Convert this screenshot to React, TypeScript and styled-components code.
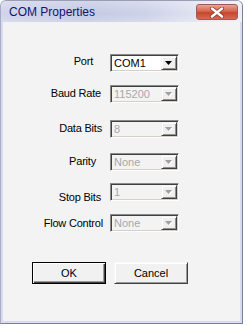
import React from "react";
import styled, { createGlobalStyle } from "styled-components";

const GlobalStyle = createGlobalStyle`
  html, body { margin: 0; padding: 0; background: #ffffff; }
  body { font-family: "Liberation Sans", Arial, sans-serif; }
  * { box-sizing: border-box; }
`;

const Window = styled.div`
  width: 243px;
  height: 324px;
  display: flex;
  flex-direction: column;
  border: 1px solid #7c7f98;
  border-top-color: #9a9db4;
  border-left-color: #a9acc6;
  border-radius: 6px 6px 0 0;
  background: #d9dcee;
  overflow: hidden;
`;

const TitleBar = styled.div`
  height: 21px;
  flex: none;
  display: flex;
  align-items: center;
  justify-content: space-between;
  padding: 0 4px 0 8px;
  background:
    linear-gradient(to bottom, rgba(255,255,255,0.25), rgba(255,255,255,0) 60%, rgba(255,255,255,0.2)),
    linear-gradient(to right, #d0d3ea 0%, #c4c9e3 35%, #cdd1e8 60%, #e6e8f4 88%, #eceef6 100%);
`;

const Title = styled.span`
  font-size: 12px;
  color: #14146a;
  padding-top: 1px;
`;

const CloseButton = styled.div`
  width: 42px;
  height: 16px;
  border-radius: 3px;
  border: 1px solid #9a5c58;
  background: linear-gradient(to bottom, #e9a493 0%, #d8634c 45%, #c54630 55%, #d86a52 100%);
  display: flex;
  align-items: center;
  justify-content: center;
  margin-top: 1px;
`;

const Client = styled.div`
  flex: 1;
  margin: 0 2px 2px 2px;
  background: #f3f3f3;
  display: flex;
  flex-direction: column;
`;

const Row = styled.div<{ $gap: number }>`
  display: flex;
  align-items: flex-start;
  height: 18px;
  margin-top: ${(p) => p.$gap}px;
`;

const Label = styled.div<{ $pr: number; $dy: number }>`
  width: 107px;
  flex: none;
  text-align: right;
  padding-right: ${(p) => p.$pr}px;
  font-size: 11px;
  letter-spacing: -0.2px;
  line-height: 18px;
  color: #000;
  margin-top: ${(p) => p.$dy}px;
  margin-bottom: ${(p) => -p.$dy}px;
  white-space: nowrap;
`;

const Combo = styled.div<{ $disabled?: boolean }>`
  width: 69px;
  height: 18px;
  display: flex;
  border: 1px solid;
  border-color: #8a8a8a #ffffff #ffffff #8a8a8a;
  box-shadow: inset 1px 1px 0 #404040, inset -1px -1px 0 #d4d0c8;
  background: ${(p) => (p.$disabled ? "#f3f3f3" : "#ffffff")};
  padding: 1px;
`;

const ComboText = styled.div<{ $disabled?: boolean }>`
  flex: 1;
  font-size: 11px;
  line-height: 14px;
  padding-left: 2px;
  color: ${(p) => (p.$disabled ? "#a8a8a8" : "#000")};
`;

const ArrowButton = styled.div`
  width: 16px;
  height: 14px;
  flex: none;
  background: #efefef;
  border: 1px solid;
  border-color: #f3f3f3 #404040 #404040 #f3f3f3;
  box-shadow: inset 1px 1px 0 #ffffff, inset -1px -1px 0 #909090;
  display: flex;
  align-items: center;
  justify-content: center;
`;

const ButtonRow = styled.div`
  display: flex;
  gap: 8px;
  margin-top: 30px;
  margin-left: 29px;
`;

const Button = styled.div<{ $default?: boolean }>`
  width: 74px;
  height: 22px;
  display: flex;
  align-items: center;
  justify-content: center;
  font-size: 11px;
  color: #000;
  background: #f1f1f1;
  border: 1px solid;
  border-color: ${(p) => (p.$default ? "#000 #000 #000 #000" : "#f8f8f8 #404040 #404040 #f8f8f8")};
  box-shadow: ${(p) =>
    p.$default
      ? "inset 1px 1px 0 #ffffff, inset -1px -1px 0 #404040, inset -2px -2px 0 #9a9a9a"
      : "inset 1px 1px 0 #ffffff, inset -1px -1px 0 #9a9a9a"};
`;

const Arrow = ({ disabled }: { disabled?: boolean }) => (
  <svg width="8" height="5" viewBox="0 0 8 5">
    {disabled && <path d="M1 1h7L4.5 5z" fill="#ffffff" />}
    <path d="M0 0h7L3.5 4z" fill={disabled ? "#a0a0a0" : "#000"} />
  </svg>
);

const CloseX = () => (
  <svg width="14" height="11" viewBox="0 0 14 11">
    <path d="M2 1.5 L12 9.5 M12 1.5 L2 9.5" stroke="#8a3a30" strokeWidth="4" strokeLinecap="round" />
    <path d="M2 1.5 L12 9.5 M12 1.5 L2 9.5" stroke="#ffffff" strokeWidth="2.4" strokeLinecap="round" />
  </svg>
);

type Field = { label: string; value: string; gap: number; pr: number; dy: number; disabled?: boolean };

const fields: Field[] = [
  { label: "Port", value: "COM1", gap: 32, pr: 17, dy: -2 },
  { label: "Baud Rate", value: "115200", gap: 13, pr: 9, dy: -1, disabled: true },
  { label: "Data Bits", value: "8", gap: 17, pr: 8, dy: -1, disabled: true },
  { label: "Parity", value: "None", gap: 15, pr: 14, dy: -1, disabled: true },
  { label: "Stop Bits", value: "1", gap: 12, pr: 9, dy: 5, disabled: true },
  { label: "Flow Control", value: "None", gap: 13, pr: 7, dy: 0, disabled: true },
];

export default function App() {
  return (
    <>
      <GlobalStyle />
      <Window>
        <TitleBar>
          <Title>COM Properties</Title>
          <CloseButton>
            <CloseX />
          </CloseButton>
        </TitleBar>
        <Client>
          {fields.map((f) => (
            <Row key={f.label} $gap={f.gap}>
              <Label $pr={f.pr} $dy={f.dy}>{f.label}</Label>
              <Combo $disabled={f.disabled}>
                <ComboText $disabled={f.disabled}>{f.value}</ComboText>
                <ArrowButton>
                  <Arrow disabled={f.disabled} />
                </ArrowButton>
              </Combo>
            </Row>
          ))}
          <ButtonRow>
            <Button $default>OK</Button>
            <Button>Cancel</Button>
          </ButtonRow>
        </Client>
      </Window>
    </>
  );
}
